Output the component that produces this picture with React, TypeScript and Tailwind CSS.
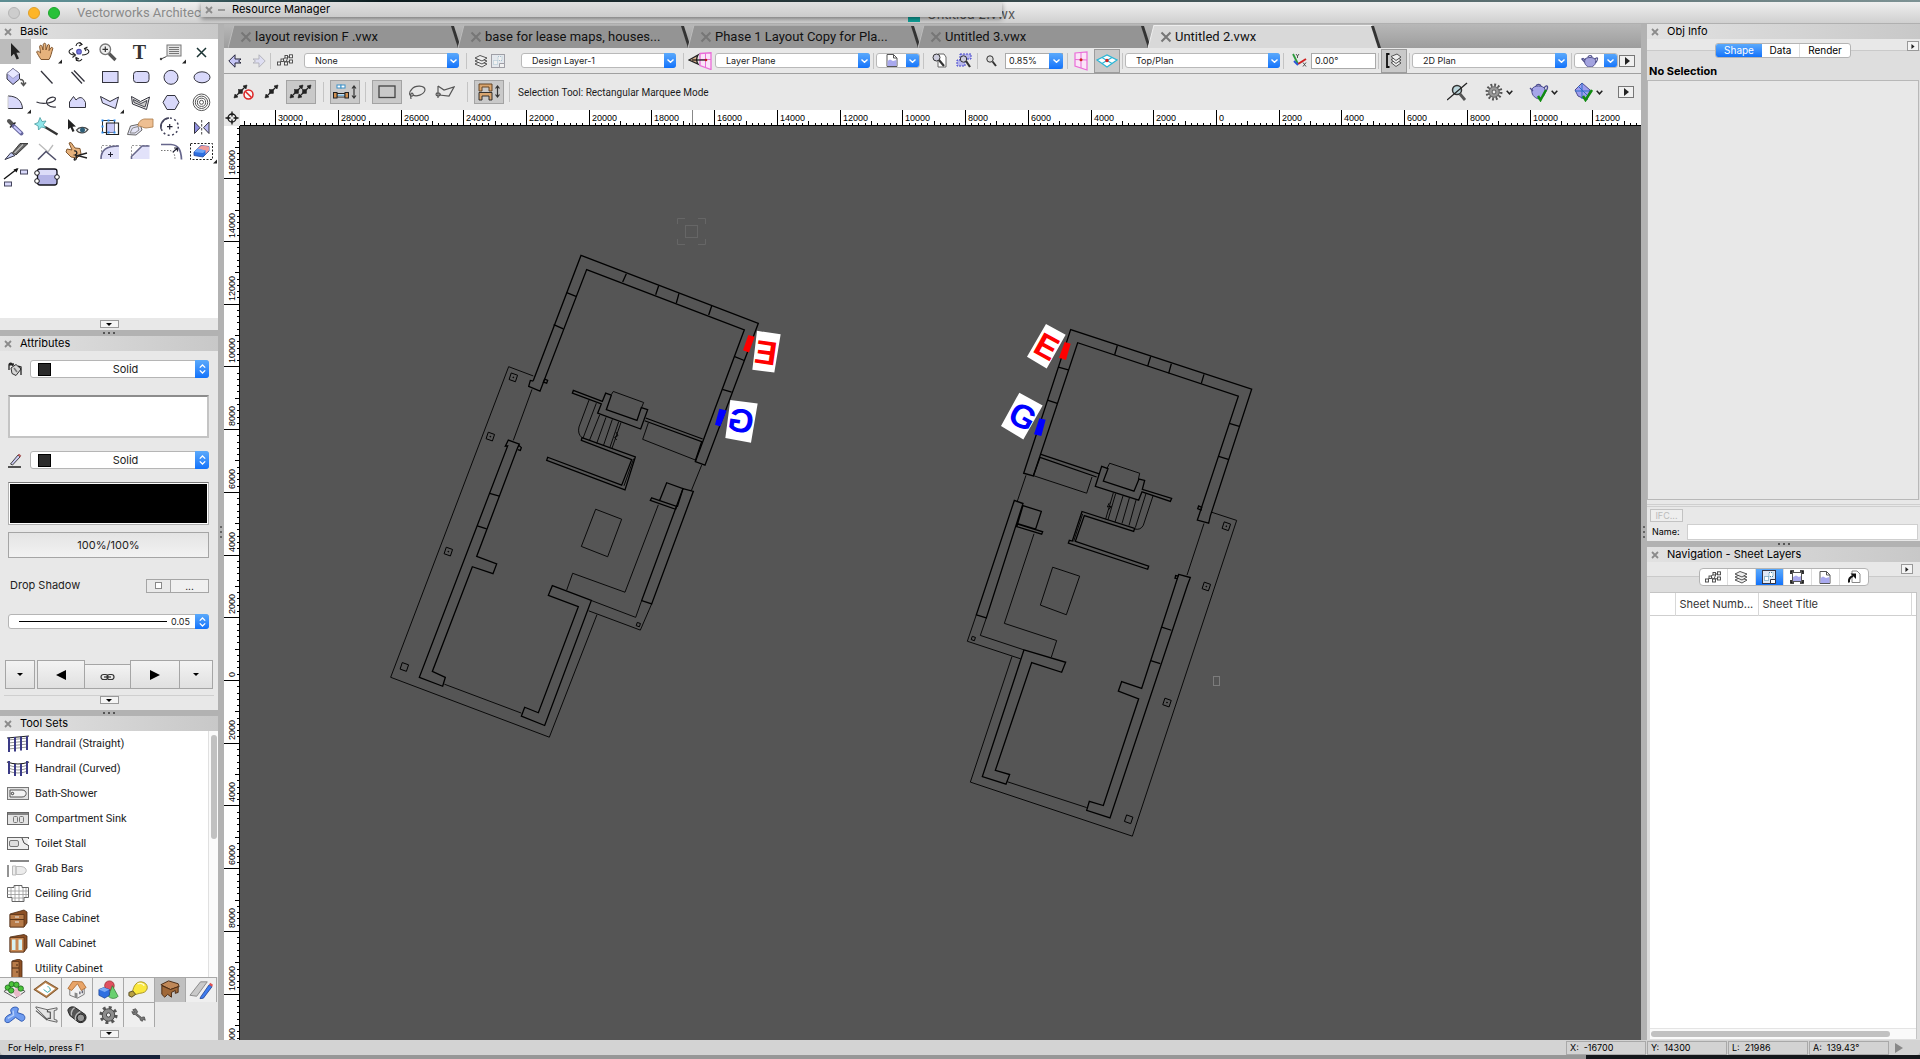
import React from "react";

type Kids = { children?: React.ReactNode };

const INK = "#33333d";
const LAV = "#d9d9fb";

/* ---------- shared pieces ---------- */

function CloseMark({ size = 8 }: { size?: number }) {
  return (
    <svg width={size} height={size} viewBox="0 0 8 8" className="shrink-0">
      <path d="M1 1L7 7M7 1L1 7" stroke={size > 8 ? "#777" : "#8b8b8b"} strokeWidth={size > 8 ? 1.4 : 1.8} />
    </svg>
  );
}

function PanelHeader({ title }: { title: string }) {
  return (
    <header className="flex h-[15px] shrink-0 items-center bg-linear-to-r from-[#e2e2e2] to-[#c8c8c8] pl-1">
      <button aria-label={"Close " + title} className="flex">
        <CloseMark />
      </button>
      <h2 className="ml-2 text-[11px] leading-[15px] text-black">{title}</h2>
    </header>
  );
}

function Splitter() {
  return (
    <div className="flex h-1.5 shrink-0 items-center justify-center gap-[3px] bg-[#b2b2b2]">
      <i className="size-0.5 bg-[#555]" />
      <i className="size-0.5 bg-[#555]" />
      <i className="size-0.5 bg-[#555]" />
    </div>
  );
}

function VSplitter() {
  return (
    <div className="flex w-1.5 shrink-0 flex-col items-center justify-center gap-[3px] bg-[#b2b2b2]">
      <i className="size-0.5 bg-[#666]" />
      <i className="size-0.5 bg-[#666]" />
      <i className="size-0.5 bg-[#666]" />
    </div>
  );
}

function CollapseButton({ label }: { label: string }) {
  return (
    <button aria-label={label} className="mx-auto flex h-2 w-[19px] items-center justify-center border border-[#999] bg-[#f4f4f4]">
      <svg width="6" height="3" viewBox="0 0 6 3">
        <path d="M0 0H6L3 3Z" />
      </svg>
    </button>
  );
}

function ArrowButton({ label, small }: { label: string; small?: boolean }) {
  return (
    <button
      aria-label={label}
      className={
        small
          ? "flex h-2.5 w-3 shrink-0 items-center justify-center border border-[#999] bg-[#f4f4f4]"
          : "flex h-3 w-4 shrink-0 items-center justify-center border border-[#777] bg-[#f0f0f0]"
      }
    >
      <svg width={small ? 4 : 5} height={small ? 5 : 8} viewBox="0 0 5 8">
        <path d="M0 0L5 4L0 8Z" fill="#222" />
      </svg>
    </button>
  );
}

function Dropdown({ label, value, className = "" }: { label: string; value: string; className?: string }) {
  return (
    <div className={"relative flex h-[15px] shrink-0 rounded-[3px] border border-[#b9b9b9] bg-white " + className}>
      <select aria-label={label} className="h-[13px] w-full appearance-none bg-transparent pl-2.5 text-[9px] leading-[13px] text-[#222] outline-none">
        <option>{value}</option>
      </select>
      <span className="pointer-events-none absolute -top-px -right-px flex h-[15px] w-3 items-center justify-center rounded-r-[3px] bg-linear-to-b from-[#5aa9fb] to-[#0f72fb]">
        <svg width="7" height="4" viewBox="0 0 7 4">
          <path d="M.5 .5L3.5 3.3L6.5 .5" fill="none" stroke="#fff" strokeWidth="1.4" />
        </svg>
      </span>
    </div>
  );
}

function Stepper() {
  return (
    <span className="pointer-events-none absolute -top-px -right-px -bottom-px flex w-[14px] items-center justify-center rounded-r-[3px] bg-linear-to-b from-[#5aa9fb] to-[#0f72fb]">
      <svg width="7" height="10" viewBox="0 0 7 10">
        <path d="M.8 3.6L3.5 1L6.2 3.6M.8 6.4L3.5 9L6.2 6.4" fill="none" stroke="#fff" strokeWidth="1.3" />
      </svg>
    </span>
  );
}

const Sep = ({ className = "" }: { className?: string }) => <i className={"h-4 w-px shrink-0 bg-[#c4c4c4] " + className} />;

/* ---------- basic palette ---------- */

const Fly = () => <path d="M31 20.5V24.5H27Z" fill="#222" />;
const Hand = () => (
  <path
    d="M10 20.5C8 17.5 6.5 15 5.6 12.8C6.5 11.5 8 12.3 9.6 14L8.6 7.3C9 5.8 10.6 6 11 7.4L12 11L12.3 5.2C12.8 3.8 14.6 4 14.8 5.4L15 11L16.6 6C17.3 5 18.8 5.6 18.6 7L18 11.6L20 8.6C21 8 22.2 8.8 21.7 10C20.5 13.5 20 17.5 18 20.5Z"
    fill="#e6b27c"
    stroke="#80562f"
    strokeWidth="1"
  />
);

const basicTools: [string, React.ReactNode][] = [
  ["Selection", <path d="M11 4V17.5L14 14.8L16.6 20.6L19 19.5L16.4 13.8L20.2 13.4Z" fill="#222" />],
  ["Pan", <><Hand /><Fly /></>],
  [
    "Flyover",
    <g fill="none" stroke="#222" strokeWidth="1.1">
      <path d="M11 9.5C5 11 6 15.500 13 16M23 9.500C29 11 28 15.500 20 16M14 7C14.500 3.500 17.500 3 19.500 5M14 19C15 22.500 18 23 20 20" />
      <path d="M10.500 13.500L13.500 16L10.500 18.500M24 12L22.500 9.500L25.500 8M17.500 3.500L20 5.500L17 7M14.500 22L14 18.500L17 20" />
      <circle cx="17" cy="12.700" r="2.300" fill="#7a7ae4" stroke="#5050b0" />
    </g>,
  ],
  [
    "Zoom",
    <>
      <path d="M16 14.500L22.500 21" stroke="#555" strokeWidth="3.200" />
      <circle cx="12.300" cy="10.300" r="5.300" fill="#eee" stroke="#777" strokeWidth="1.300" />
      <path d="M9.500 10.300H15M12.300 7.500V13" stroke="#333" strokeWidth="1.200" />
    </>,
  ],
  ["Text", <text x="15.500" y="20" textAnchor="middle" fontFamily="Liberation Serif, serif" fontWeight="bold" fontSize="20" fill="#333">T</text>],
  [
    "Callout",
    <>
      <rect x="12" y="6" width="14" height="11" fill="#e4e4e4" stroke="#777" />
      <path d="M14 8.500H24M14 10.500H24M14 12.500H24M14 14.500H24" stroke="#777" />
      <path d="M11.500 17.500L6 20" stroke="#444" />
      <circle cx="6" cy="20" r="1.200" fill="#444" />
      <Fly />
    </>,
  ],
  ["Locus", <path d="M11 9L20 18M20 9L11 18" stroke="#1a3333" strokeWidth="1.500" />],
  [
    "Extrude",
    <>
      <path d="M7 9.500L13 4.500L19.500 9.500V15L13 20.500L7 15Z" fill="#b9b9ef" stroke={INK} />
      <path d="M7 9.500L13 4.500L19.500 9.500L13 14.500Z" fill="#e8e8ff" stroke="#8888b0" strokeWidth=".7" />
      <path d="M20 15.500C23 15.500 24 17 23.500 20M21 18.500L23.500 21.500L26 18.500" fill="none" stroke="#555" strokeWidth="1.500" />
    </>,
  ],
  ["Line", <path d="M10 7L21.500 19.500" stroke={INK} strokeWidth="1.300" />],
  ["Double Line", <path d="M9.500 8L20 19.500M12 6.500L22.500 17.500" stroke={INK} strokeWidth="1.300" />],
  ["Rectangle", <rect x="9.500" y="7.500" width="15.500" height="11" fill={LAV} stroke={INK} />],
  ["Rounded Rectangle", <rect x="9.500" y="7.500" width="15.500" height="11" rx="3" fill={LAV} stroke={INK} />],
  ["Circle", <circle cx="16" cy="13.300" r="7" fill={LAV} stroke={INK} />],
  ["Oval", <ellipse cx="16" cy="13.300" rx="8" ry="5.500" fill={LAV} stroke={INK} />],
  ["Arc", <><path d="M8 7C17 7 22 12 22.500 19.500H8" fill={LAV} stroke={INK} /><path d="M8 7V19.500" stroke="#ccc" /><Fly /></>],
  ["Freehand", <path d="M5.500 13C10 15 20 15 24 11C26 8 21 7 17 10C13 14 18 19 25 18" fill="none" stroke={INK} strokeWidth="1.200" />],
  ["Polyline", <path d="M7.500 18.500V13L11.500 7.500L14 11C18 7 21 8 23.500 13.500V18.500Z" fill={LAV} stroke={INK} />],
  ["Polygon", <><path d="M7.500 7.500L17 12.500L25.500 8L22.500 19.500L9.500 14Z" fill={LAV} stroke={INK} /><Fly /></>],
  [
    "Double Polygon",
    <>
      <path d="M7.500 7.500L16.500 12.500L25.500 8L22.500 20.500L8.500 15Z" fill="#eee" stroke={INK} />
      <path d="M9.500 10.500L17 14.500L23 11.500L21 18L10 13.500Z" fill="#ccc" stroke={INK} strokeWidth=".9" />
    </>,
  ],
  ["Regular Polygon", <path d="M12 6.500H20L24 13.300L20 20.500H12L8 13.300Z" fill={LAV} stroke={INK} />],
  [
    "Spiral",
    <g fill="none" stroke="#555" strokeWidth="1">
      <circle cx="15.500" cy="13.300" r="8.300" /><circle cx="15.500" cy="13.300" r="6.200" /><circle cx="15.500" cy="13.300" r="4.100" /><circle cx="15.500" cy="13.300" r="2" />
    </g>,
  ],
  [
    "Eyedropper",
    <>
      <path d="M9 7L12.500 10.500" stroke="#555" strokeWidth="4" strokeLinecap="round" />
      <path d="M10 13.500L15.500 8.500" stroke="#222" strokeWidth="1.500" />
      <path d="M13.500 12L21.500 19.500" stroke="#66669c" strokeWidth="4" strokeLinecap="round" />
      <path d="M14 12.500L21 19" stroke="#ccccff" strokeWidth="2" />
    </>,
  ],
  [
    "Magic Wand",
    <>
      <path d="M14 13L26.500 20.500" stroke="#333" strokeWidth="2.500" />
      <path d="M9 3.500L11 7.500L15 7L12.500 10.500L14.500 14L10.500 13L7.500 16L7.200 12L3.500 10L7.200 8.500Z" fill="#8fe6ea" stroke="#4a9aa0" strokeWidth=".8" />
    </>,
  ],
  [
    "Visibility",
    <>
      <path d="M6 5V15.500L8.500 13.500L10.500 18L12.500 17L10.500 12.800L14 12.500Z" fill="#222" />
      <path d="M14.500 16C17 12.500 23 12.500 26 15.500C23 20 17 20 14.500 16Z" fill="#e8eef2" stroke="#444" strokeWidth="1.200" />
      <circle cx="20.500" cy="16" r="2.500" fill="#2f5f78" />
    </>,
  ],
  [
    "Clip",
    <>
      <rect x="9.500" y="6.500" width="12" height="12" fill="none" stroke="#333" />
      <rect x="13.500" y="9" width="8" height="9.500" fill="#c9c9f8" />
      <path d="M13.500 9H25.500V20.500H13.500Z" fill="none" stroke="#222" strokeWidth="1.200" />
      <path d="M8.500 5.500h2v2h-2zM14.500 5.500h2v2h-2zM20.500 5.500h2v2h-2zM8.500 11.500h2v2h-2zM8.500 17.500h2v2h-2zM14.500 17.500h2v2h-2zM20.500 17.500h2v2h-2z" fill="#2a8cf0" />
    </>,
  ],
  [
    "Reshape",
    <>
      <path d="M3.500 20.500L6.500 12L16 10L18 16L12 21Z" fill="#e4e4f6" stroke="#666" />
      <path d="M6 19L8.500 14L14 12.500L15 16L11 19Z" fill="none" stroke="#888" />
      <path d="M14 12C14 7 19 4.500 22 5H29V13L22 14C19 14 18 12 14 12Z" fill="#eebf92" stroke="#a87848" strokeWidth=".8" />
    </>,
  ],
  [
    "Rotate",
    <>
      <circle cx="14.700" cy="12.700" r="8.600" fill="none" stroke="#44445c" strokeWidth="1.500" strokeDasharray="2 2.500" />
      <path d="M6.100 15A8.600 8.600 0 0 1 14 4.100" fill="none" stroke="#44445c" strokeWidth="1.500" />
      <path d="M12 12.700H17.500M14.700 10V15.500" stroke="#223" strokeWidth="1.200" />
    </>,
  ],
  [
    "Mirror",
    <>
      <path d="M8.500 8V19.500L14 13.700Z" fill="#8f8fe0" stroke={INK} />
      <path d="M23 8V19.500L17.500 13.700Z" fill="#b9b9f4" stroke={INK} />
      <path d="M15.700 6V21" stroke="#444" strokeDasharray="2.500 1.500" />
    </>,
  ],
  [
    "Split",
    <>
      <path d="M5 20.500L11 13.500L15 16.500Z" fill="#c5cdf5" stroke="#334" />
      <path d="M12.500 13.500L20 4.500H28L16 16Z" fill="#666" stroke="#222" strokeWidth=".8" />
      <path d="M14.500 14L23 5.500" stroke="#bbb" strokeWidth="1.200" />
    </>,
  ],
  ["Trim", <><path d="M8 5L17 13L22 6" fill="none" stroke="#bbb" strokeWidth="1.300" /><path d="M7 20.500L15 12.500L25 21" fill="none" stroke="#50506a" strokeWidth="1.600" /></>],
  [
    "Connect",
    <>
      <path d="M4 13L5 10L10 11L7 4L9 3.500L13 9L18 9.500L19 15L15 19L9 18Z" fill="#e6b27c" stroke="#80562f" />
      <path d="M12 12C15 11 16 15 13 16L25 19M13 19C10 22 16 22 14 17L25 14" fill="none" stroke="#222" strokeWidth="1.300" />
    </>,
  ],
  [
    "Fillet",
    <>
      <path d="M8.500 20V6.500H26" fill="none" stroke="#999" strokeDasharray="2 1.500" />
      <path d="M8 20C8 11 13 7 26 7V20Z" fill="#e2e2fa" />
      <path d="M8 20C8 11 13 7 26 7" fill="none" stroke="#66668c" strokeWidth="1.600" />
      <path d="M15 15.500H20M17.500 13V18" stroke="#223" />
    </>,
  ],
  [
    "Chamfer",
    <>
      <path d="M7.500 20V6.500H25" fill="none" stroke="#999" strokeDasharray="2 1.500" />
      <path d="M7.500 20L18 7H25.500V20Z" fill="#e2e2fa" />
      <path d="M7.500 20V17.500L18 7H25.500" fill="none" stroke="#66668c" strokeWidth="1.600" />
    </>,
  ],
  [
    "Offset",
    <>
      <path d="M6 5.500H16C23 6 26 10 26.500 20.500" fill="none" stroke="#66668c" strokeWidth="1.700" />
      <path d="M6 11.500H15C18 12 20 15 20 20" fill="none" stroke="#777" strokeDasharray="1.500 1.500" />
      <path d="M18 13L22.500 9M19 9H22.500V12.500" fill="none" stroke="#223" strokeWidth="1.200" />
    </>,
  ],
  [
    "Eraser",
    <>
      <rect x="4.500" y="4.500" width="22" height="16" fill="none" stroke="#222" strokeDasharray="2 1.500" />
      <path d="M8 13L15 6.500L23 7.500V12L17 18L8 16.500Z" fill="#2d6fe0" stroke="#28479c" strokeWidth=".8" />
      <path d="M11.500 10L15.500 6.500L23 7.500V11.500L19.500 15V11.500Z" fill="#ee9c9c" />
      <path d="M8 13L11.500 9.500L19.500 11.500L17 14Z" fill="#6ea4f6" />
      <Fly />
    </>,
  ],
  [
    "Data Connect",
    <>
      <path d="M4 15L17 5" stroke="#111" strokeWidth="1.400" />
      <path d="M18.500 4L13.500 5.500L16.500 8.500Z" fill="#111" />
      <rect x="20.500" y="6" width="7" height="4" fill={LAV} stroke="#44445c" />
      <rect x="4.500" y="18" width="7" height="4" fill={LAV} stroke="#44445c" />
    </>,
  ],
  [
    "Component",
    <>
      <rect x="6.500" y="5" width="19.500" height="16" rx="2.500" fill="#b4b4e6" stroke="#15151c" strokeWidth="1.300" />
      <path d="M7.500 6h17.500v5h-17.500z" fill="#dcdcf8" />
      <g fill="#fff" stroke="#15151c"><circle cx="6" cy="9" r="2.300" /><circle cx="6" cy="17" r="2.300" /><circle cx="26" cy="13" r="2.300" /></g>
    </>,
  ],
];

function BasicPalette() {
  return (
    <section>
      <PanelHeader title="Basic" />
      <div className="h-[279px] bg-white">
        <div className="grid grid-cols-[repeat(7,31px)]">
          {basicTools.map(([name, art], i) => (
            <button key={name} aria-label={name} className={i === 0 ? "h-[25px] bg-[#bcbcbc]" : "h-[25px]"}>
              <svg width="31" height="25" viewBox="0 0 31 25">{art}</svg>
            </button>
          ))}
        </div>
      </div>
      <div className="flex h-3 items-center">
        <CollapseButton label="Collapse basic palette" />
      </div>
    </section>
  );
}

/* ---------- attributes ---------- */

function FillSelect({ label }: { label: string }) {
  return (
    <div className="relative flex h-[18px] flex-1 items-center rounded-[3px] border border-[#b5b5b5] bg-white">
      <i className="ml-[7px] size-[13px] shrink-0 border border-black bg-[#2b2b2b]" />
      <select aria-label={label} className="h-4 w-full appearance-none bg-transparent pr-4 pl-2 text-center text-[11px] leading-4 text-[#222] outline-none [text-align-last:center]">
        <option>Solid</option>
      </select>
      <Stepper />
    </div>
  );
}

const navBtn = "flex items-center justify-center border border-[#a5a5a5] bg-linear-to-b from-[#f3f3f3] to-[#e0e0e0]";

function Attributes() {
  return (
    <section className="flex h-[374px] shrink-0 flex-col">
      <PanelHeader title="Attributes" />
      <div className="flex flex-col pt-[9px] pr-[9px] pl-2">
        <div className="flex items-center gap-2">
          <svg width="14" height="15" viewBox="0 0 14 15">
            <path d="M3 6L8 2.500L13 7L8 13.500L4 11.500Z" fill="#d6d6d6" stroke="#333" />
            <path d="M1 8V3C1 1 4 0 5 4M1 3L6 2M10 4L13 5V13" fill="none" stroke="#222" strokeWidth="1.300" />
            <path d="M6 6L9 10" stroke="#777" strokeWidth="1.500" />
          </svg>
          <FillSelect label="Fill style" />
        </div>
        <button aria-label="Fill color" className="mt-[17px] h-[43px] border-2 border-[#c4c4c4] border-t-[#8c8c8c] bg-white" />
        <div className="mt-[13px] flex items-center gap-2">
          <svg width="14" height="15" viewBox="0 0 14 15">
            <path d="M2.500 11L10 2L12 4L4.500 12Z" fill="#c9c9f2" stroke="#444" />
            <path d="M10 2L11 1L13 2.800L12 4Z" fill="#d66" stroke="#844" strokeWidth=".6" />
            <path d="M0 14H13" stroke="#111" strokeWidth="1.400" />
          </svg>
          <FillSelect label="Pen style" />
        </div>
        <button aria-label="Pen color" className="mt-[13px] h-[43px] border border-[#b0b0b0] border-t-[#777] bg-white p-px">
          <span className="block h-full bg-black" />
        </button>
        <button className="mt-[7px] h-[26px] border border-[#a5a5a5] bg-linear-to-b from-[#e4e4e4] to-[#f2f2f2] text-[11px] leading-6 text-[#222]">100%/100%</button>
        <div className="mt-5 flex items-center justify-between">
          <span className="ml-0.5 text-[11px] leading-[15px] text-[#222]">Drop Shadow</span>
          <div className="flex h-[14px]">
            <label className="flex w-6 items-center justify-center border border-r-0 border-[#a5a5a5] bg-[#e9e9e9]">
              <input type="checkbox" aria-label="Drop shadow" className="size-[7px] appearance-none border border-[#888] bg-white" />
            </label>
            <button aria-label="Drop shadow settings" className="w-[39px] border border-[#a5a5a5] bg-[#f0f0f0] text-[10px] leading-[12px]">...</button>
          </div>
        </div>
        <div className="relative mt-[21px] flex h-[15px] items-center rounded-[3px] border border-[#b5b5b5] bg-white">
          <i className="ml-2.5 h-px flex-1 bg-black" />
          <select aria-label="Line thickness" className="h-[13px] w-[41px] appearance-none bg-transparent pl-1 text-[9px] leading-[13px] text-[#222]">
            <option>0.05</option>
          </select>
          <Stepper />
        </div>
      </div>
      <div className="mt-[31px] flex items-end px-[5px]">
        <button aria-label="Start marker options" className={navBtn + " mr-0.5 h-[29px] w-[30px]"}>
          <svg width="6" height="3" viewBox="0 0 6 3"><path d="M0 0H6L3 3Z" /></svg>
        </button>
        <button aria-label="Start marker" className={navBtn + " h-[29px] w-12"}>
          <svg width="10" height="10" viewBox="0 0 10 10"><path d="M10 0V10L0 5Z" /></svg>
        </button>
        <button aria-label="Link markers" className={navBtn + " h-[25px] flex-1 border-x-0"}>
          <svg width="15" height="8" viewBox="0 0 15 8" fill="none" stroke="#333" strokeWidth="1.200">
            <rect x="1" y="1.500" width="7" height="5" rx="2.500" /><rect x="7" y="1.500" width="7" height="5" rx="2.500" /><path d="M4 4H11" />
          </svg>
        </button>
        <button aria-label="End marker" className={navBtn + " h-[29px] w-[50px]"}>
          <svg width="10" height="10" viewBox="0 0 10 10"><path d="M0 0V10L10 5Z" /></svg>
        </button>
        <button aria-label="End marker options" className={navBtn + " h-[29px] w-[33px] border-l-0"}>
          <svg width="6" height="3" viewBox="0 0 6 3"><path d="M0 0H6L3 3Z" /></svg>
        </button>
      </div>
      <div className="mx-1 mt-1.5 flex border-t border-[#cfcfcf]">
        <CollapseButton label="Collapse attributes" />
      </div>
    </section>
  );
}

/* ---------- tool sets ---------- */

const toolItems: [string, React.ReactNode][] = [
  [
    "Handrail (Straight)",
    <>
      <path d="M2 6L22 4M2 9L22 7M2 12L22 10M2 15L22 13" stroke="#888" strokeWidth=".9" />
      <path d="M1 4L23 2" stroke="#222" strokeWidth="1.200" />
      <path d="M3 3.500V18M9 3V17.500M15 2.500V16.500M21 2V16" stroke="#3a3a86" strokeWidth="2" />
    </>,
  ],
  [
    "Handrail (Curved)",
    <>
      <path d="M2 6Q12 10 22 6M2 9Q12 13 22 9M2 12Q12 16 22 12" fill="none" stroke="#888" strokeWidth=".9" />
      <path d="M1 3Q12 7 23 3" fill="none" stroke="#222" strokeWidth="1.200" />
      <path d="M3 2V15M9 5V17M15 5V17M21 2V15" stroke="#3a3a86" strokeWidth="2" />
    </>,
  ],
  [
    "Bath-Shower",
    <>
      <rect x="1.500" y="3.500" width="21" height="12" fill="#e0e0e0" stroke="#777" />
      <path d="M4 6H16C21.500 6 21.500 13 16 13H4Z" fill="#f2f2f2" stroke="#555" />
      <circle cx="6.500" cy="9.500" r="1.200" fill="none" stroke="#333" />
    </>,
  ],
  [
    "Compartment Sink",
    <>
      <rect x="1.500" y="3.500" width="21" height="12" fill="#e4e4e4" stroke="#666" />
      <path d="M1 5H23" stroke="#666" strokeWidth="1.500" />
      <rect x="7.500" y="7.500" width="4" height="6" rx="1" fill="none" stroke="#777" />
      <rect x="13.500" y="7.500" width="4" height="6" rx="1" fill="none" stroke="#777" />
    </>,
  ],
  [
    "Toilet Stall",
    <>
      <rect x="1.500" y="3.500" width="21" height="12" fill="#eee" stroke="#666" />
      <path d="M22.500 5V11" stroke="#fff" strokeWidth="1.500" />
      <rect x="3.500" y="6.500" width="9" height="6" rx="1.500" fill="#ddd" stroke="#777" />
      <path d="M16 4L18 9L22.500 11.500" fill="none" stroke="#444" />
    </>,
  ],
  [
    "Grab Bars",
    <>
      <path d="M4 2H23M2 6V18" stroke="#888" strokeWidth="1.800" />
      <path d="M6.500 7H10V16H6.500ZM10 7.500H15C22 8 22 15 15 15.500H10Z" fill="#ececec" stroke="#bbb" />
    </>,
  ],
  [
    "Ceiling Grid",
    <>
      <path d="M1.500 3.500H8V1.500H16V3.500H22.500V13.500H18V17.500H6V13.500H1.500Z" fill="#fff" stroke="#666" />
      <path d="M1.500 7H22M1.500 10.500H22M5 3V13M9 2V17M13 2V17M17 4V17M20 4V13M6 14H18" stroke="#999" strokeWidth=".8" />
    </>,
  ],
  [
    "Base Cabinet",
    <>
      <path d="M4 5L18 1L21 3V14L18 18H4Z" fill="#8c4f24" stroke="#4a2a12" strokeWidth=".8" />
      <path d="M4 5.500H18V18H4Z" fill="#b87c4a" stroke="#5a3418" strokeWidth=".8" />
      <path d="M4 10.500H18" stroke="#5a3418" /><path d="M9 8H13M9 13H13" stroke="#eee" />
    </>,
  ],
  [
    "Wall Cabinet",
    <>
      <path d="M4 3L18 .5L21 2V14L18 18H4Z" fill="#8c4f24" stroke="#4a2a12" strokeWidth=".8" />
      <path d="M4 3.500H18V18H4Z" fill="#c98a55" stroke="#5a3418" strokeWidth=".8" />
      <path d="M6 5.500H9.500V16H6ZM12.500 5.500H16V16H12.500Z" fill="#d8f2f2" />
    </>,
  ],
  [
    "Utility Cabinet",
    <>
      <path d="M6 2L13 0L16 2V19H6Z" fill="#8c4f24" stroke="#4a2a12" strokeWidth=".8" />
      <path d="M6 2.500H13V19H6Z" fill="#b87c4a" stroke="#5a3418" strokeWidth=".8" />
      <path d="M6 9H13M11 5V7M11 12V14" stroke="#4a2a12" />
    </>,
  ],
];

const setIcons: [string, React.ReactNode][] = [
  [
    "Site Planning",
    <>
      <path d="M4 14L14 7L26 14L16 21Z" fill="#eee" stroke="#555" />
      <path d="M12 13L18 10L22 18L17 20Z" fill="#e7b9c8" />
      <g fill="#4cc43c" stroke="#1c601c" strokeWidth=".8"><circle cx="8" cy="10" r="2.800" /><circle cx="12" cy="6.500" r="2.800" /><circle cx="11.500" cy="13" r="2.800" /><circle cx="17" cy="7" r="2.800" /><circle cx="21.500" cy="11" r="2.800" /></g>
    </>,
  ],
  [
    "Building Shell",
    <>
      <path d="M4 12L15 4L27 11L16 19.500Z" fill="#fff" stroke="#b88450" strokeWidth="2" />
      <path d="M3 12L15 3L28 11L16 20.500Z" fill="none" stroke="#5a3a1a" strokeWidth=".6" />
      <path d="M13 12L17 15L20 13C20 11 19 9 17 9" fill="none" stroke="#3aa" />
    </>,
  ],
  [
    "Architecture",
    <>
      <path d="M8 11V18L16 21L23 17V9L16 5Z" fill="#f2f2f2" stroke="#777" />
      <path d="M6 11L11 3.500L21 4L25 10L20 13L16 6L10 13Z" fill="#e8a468" stroke="#a86428" strokeWidth=".8" />
      <path d="M13 20V15L16 16V21Z" fill="#888" />
      <path d="M18.500 14V17M21 13V16" stroke="#556" strokeWidth="1.300" />
    </>,
  ],
  [
    "3D Modeling",
    <>
      <circle cx="17" cy="8" r="5" fill="#e05060" stroke="#902020" strokeWidth=".7" />
      <path d="M20 8L26 19C24 22 18 22 16 19Z" fill="#6ad070" stroke="#2a702a" strokeWidth=".7" />
      <path d="M6 12L11 10L17 12V18L12 21L6 18Z" fill="#2f6fe0" stroke="#1c408c" strokeWidth=".7" />
      <path d="M6 12L11 10L17 12L12 14.500Z" fill="#7aaaf6" />
    </>,
  ],
  [
    "Visualization",
    <>
      <path d="M9 14C9 12 11 3.500 18 4C26 5 26 14 19 15.500C15 16 13 17 11 17.500Z" fill="#fbe83c" stroke="#a8942a" />
      <path d="M5 15L9 13.500L12 17L8 20L5 18.500Z" fill="#b8a040" stroke="#554a20" />
      <path d="M14 6C17 5 20 6 21 8" fill="none" stroke="#fffbd0" strokeWidth="1.500" />
    </>,
  ],
  [
    "Furn/Fixtures",
    <>
      <path d="M6 7L14 3L24 6L25 9L16 12Z" fill="#c08858" stroke="#4a2a12" />
      <path d="M7 8L16 12L24 9V15L21 16V13L17 15V20L13 17L10 20L7 17Z" fill="#a06838" stroke="#4a2a12" />
    </>,
  ],
  [
    "Dims/Notes",
    <>
      <path d="M4 18L15 4H22L11 19Z" fill="#c9c9c9" stroke="#888" />
      <path d="M15 20L24 7L27 9L18 21L14.500 21.500Z" fill="#3f7df0" stroke="#1c3c8c" strokeWidth=".8" />
      <path d="M24 7L25 5L28 7L27 9Z" fill="#e05050" />
    </>,
  ],
  [
    "Piping",
    <>
      <path d="M5 18C5 14 8 13 12 11L11 8C11 4 18 3 19 6L18 10L24 12C27 14 26 19 22 19L16 15L11 19C9 21 5 21 5 18Z" fill="#6f9cf0" stroke="#2b56b0" strokeWidth="1" />
      <path d="M8 16L14 12.500L13.500 8" fill="none" stroke="#b4cefa" strokeWidth="1.500" />
    </>,
  ],
  [
    "Detailing",
    <>
      <path d="M5 4L17 7L27 5V7L24 8V17L27 18V20L18 18L5 5Z" fill="#e4e4e4" stroke="#555" strokeWidth=".9" />
      <path d="M17 7V9L20 9.500V16L17 16M5 8L17 18" fill="none" stroke="#555" strokeWidth="1.200" />
    </>,
  ],
  [
    "Machine Design",
    <>
      <path d="M6 8C6 4 12 3 14 5L24 12C27 17 22 22 17 20L8 13Z" fill="#555" stroke="#222" />
      <path d="M13 5C10 7 9 10 10 13M19 9C15 11 13 14 14 18" fill="none" stroke="#bbb" strokeWidth="1.300" />
      <circle cx="19.500" cy="15.500" r="4" fill="#999" stroke="#222" />
    </>,
  ],
  [
    "Fasteners",
    <>
      <circle cx="16" cy="12.500" r="8" fill="none" stroke="#555" strokeWidth="3" strokeDasharray="3.100 3.180" />
      <circle cx="16" cy="12.500" r="6.500" fill="#8c8c8c" stroke="#444" />
      <circle cx="16" cy="12.500" r="2.200" fill="#eee" stroke="#444" />
    </>,
  ],
  [
    "MEP",
    <path d="M9 7L12 6L14 9L13 11L18 15L21 14.500L22 18L20 17L19 19L17 18L16.500 16L11.500 12L9.500 12L8 9L11 9.500Z" fill="#777" stroke="#444" strokeWidth=".8" />,
  ],
];

function ToolSets() {
  return (
    <section className="flex min-h-0 flex-1 flex-col">
      <PanelHeader title="Tool Sets" />
      <div className="flex min-h-0 flex-1 overflow-hidden bg-white">
        <ul className="flex-1">
          {toolItems.map(([name, art]) => (
            <li key={name}>
              <button className="flex h-[25px] w-full items-center pl-1.5 text-left font-['Roboto',sans-serif] text-[11px] leading-[15px] text-[#1c1c1c]">
                <svg width="24" height="19" viewBox="0 0 24 19" className="mr-[5px] shrink-0">{art}</svg>
                {name}
              </button>
            </li>
          ))}
        </ul>
        <div className="w-2.5 border-l border-[#e0e0e0] bg-[#fafafa] px-px pt-1">
          <div className="mx-auto h-26 w-1.5 rounded-full bg-[#c1c1c1]" />
        </div>
      </div>
      <div className="grid grid-cols-[repeat(7,31px)] bg-[#e8e8e8]">
        {setIcons.map(([name, art]) => (
          <button
            key={name}
            aria-label={name}
            className={
              "flex h-[25px] items-center justify-center border-t border-r border-[#a8a8a8] " + (name === "Furn/Fixtures" ? "bg-[#c0c0c0]" : "bg-[#efefef]")
            }
          >
            <svg width="30" height="24" viewBox="0 0 31 25">{art}</svg>
          </button>
        ))}
      </div>
      <div className="flex h-[13px] items-center">
        <CollapseButton label="Collapse tool sets" />
      </div>
    </section>
  );
}

/* ---------- document tabs ---------- */

const docs = ["layout revision F .vwx", "base for lease maps, houses...", "Phase 1 Layout Copy for Pla...", "Untitled 3.vwx", "Untitled 2.vwx"];

function DocTabs() {
  return (
    <nav className="flex h-6 shrink-0 items-end bg-linear-to-b from-[#b8b8b8] to-[#9d9d9d] pl-1" aria-label="Open documents">
      {docs.map((d, i) => {
        const active = i === docs.length - 1;
        return (
          <div key={d} className="relative flex h-[23px] w-[230px] shrink-0 items-center pl-3">
            <svg className="absolute inset-0" width="236" height="23" viewBox="0 0 236 23">
              <path d="M6 0H224L232 23H0Z" fill={active ? "#d9d9d9" : "#949494"} />
              <path d="M6 .5H224" stroke={active ? "#eee" : "#b0b0b0"} />
              <path d="M0 23L6 0" stroke={active ? "#eee" : "#bcbcbc"} />
              <path d="M223 1H226L233 23H230Z" fill="#333" />
            </svg>
            <button aria-label={"Close " + d} className="relative flex">
              <CloseMark size={12} />
            </button>
            <a href="#" className="relative ml-[3px] font-['Roboto',sans-serif] text-[13px] leading-4 whitespace-nowrap text-[#111]">{d}</a>
          </div>
        );
      })}
    </nav>
  );
}

/* ---------- toolbars ---------- */

const ClassesIcon = () => (
  <svg width="16" height="13" viewBox="0 0 16 13" fill="#f4f4f4" stroke="#444" strokeWidth=".9">
    <path d="M3 9L5 6L9 8L11 3L14 2.500M9 8L14 7.500M5 6L9 3" fill="none" />
    <rect x=".5" y="8" width="3" height="3" /><rect x="4" y="5" width="2.500" height="2.500" /><rect x="7.500" y="8" width="3" height="3" /><rect x="12.500" y=".8" width="3" height="3" /><rect x="12.500" y="6" width="3" height="3" /><rect x="8" y="1.500" width="2.500" height="2.500" />
  </svg>
);
const LayersIcon = () => (
  <svg width="14" height="14" viewBox="0 0 14 14" fill="#eee" stroke="#444" strokeWidth=".9">
    <path d="M1 10L6 7.500L13 10L8 13Z" /><path d="M1 7L6 4.500L13 7L8 10Z" /><path d="M1 4L6 1.500L13 4L8 7Z" />
  </svg>
);
const SheetIcon = () => (
  <svg width="14" height="14" viewBox="0 0 14 14" fill="#dfe8f6" stroke="#334">
    <rect x=".5" y=".5" width="13" height="13" /><rect x="2.500" y="6.500" width="4" height="4" fill="#fff" stroke="#48a" strokeDasharray="1 1" /><path d="M7 2.500H11V6.500H7Z" fill="#fff" stroke="#48a" strokeDasharray="1 1" /><path d="M8.500 13.500V9.500H13.500V13.500Z" fill="#fff" />
  </svg>
);
const PageIcon = () => (
  <svg width="12" height="13" viewBox="0 0 12 13" stroke="#555">
    <path d="M1 .5H7.500L11 4V12.500H1Z" fill="#fff" /><path d="M1.500 7L4 5.500L7 7L10.500 6V12H1.500Z" fill="#a9a9ee" stroke="none" /><path d="M7.500 .5V4H11" fill="none" />
  </svg>
);
const Teapot = () => (
  <svg width="18" height="14" viewBox="0 0 18 14">
    <path d="M4 5C6 3 12 3 14 5C16 9 13 13 9 13C5 13 2.500 9 4 5Z" fill="#a3a3df" stroke="#50508c" />
    <path d="M7 3.500C7 1 11 1 11 3.500M3.500 8L.8 5L2 4.500L4.500 6M14 5C17 2 17.500 5 14.500 9" fill="none" stroke="#50508c" strokeWidth="1.200" />
  </svg>
);

function SmallSelect({ label, children, className = "" }: Kids & { label: string; className?: string }) {
  return (
    <button aria-label={label} className={"flex h-[15px] w-11 shrink-0 items-center overflow-hidden rounded-[3px] border border-[#b9b9b9] bg-white " + className}>
      <span className="flex flex-1 justify-center">{children}</span>
      <span className="flex h-[15px] w-[13px] items-center justify-center bg-linear-to-b from-[#5aa9fb] to-[#0f72fb]">
        <svg width="7" height="4" viewBox="0 0 7 4"><path d="M.5 .5L3.500 3.300L6.500 .5" fill="none" stroke="#fff" strokeWidth="1.400" /></svg>
      </span>
    </button>
  );
}

function ViewBar() {
  return (
    <div className="flex h-[26px] shrink-0 items-center overflow-hidden border-b border-[#a0a0a0] bg-[#e8e8e8]">
      <button aria-label="Previous view" className="ml-1">
        <svg width="14" height="14" viewBox="0 0 14 14"><path d="M.8 7L7 .8V5H13L10.500 7L13 9H7V13.200Z" fill="#c6c6f6" stroke="#222238" /></svg>
      </button>
      <button aria-label="Next view" className="ml-2.5">
        <svg width="14" height="14" viewBox="0 0 14 14"><path d="M13.200 7L7 .8V5H1L3.500 7L1 9H7V13.200Z" fill="#dedef2" stroke="#b4b4bc" /></svg>
      </button>
      <Sep className="ml-1" />
      <button aria-label="Classes" className="ml-1.5"><ClassesIcon /></button>
      <Dropdown label="Active class" value="None" className="ml-[11px] w-[155px]" />
      <Sep className="ml-[7px]" />
      <button aria-label="Layers" className="ml-[7px]"><LayersIcon /></button>
      <button aria-label="Sheet layers" className="ml-[3px] opacity-40"><SheetIcon /></button>
      <Dropdown label="Active layer" value="Design Layer-1" className="ml-4 w-[155px]" />
      <Sep className="ml-[7px]" />
      <svg width="24" height="18" viewBox="0 0 24 18" className="ml-1 shrink-0">
        <path d="M12 1.500L23 .8V17.500L12 13.500Z" fill="#fbe4f8" stroke="#ea6cd8" strokeWidth="1.300" />
        <path d="M17.500 1V15M12 7.500H23" stroke="#ea6cd8" />
        <path d="M1 8L10 3C8.500 5.500 8.500 9.500 10 12Z" fill="#d8b08c" stroke="#222" strokeWidth="1.300" />
        <path d="M4 8H18" stroke="#111" strokeWidth="1.200" /><circle cx="18" cy="8" r="1.300" fill="#c01818" />
      </svg>
      <Dropdown label="Active plane" value="Layer Plane" className="ml-[3px] w-[155px]" />
      <Sep className="ml-[3px]" />
      <SmallSelect label="Saved views" className="ml-0.5"><PageIcon /></SmallSelect>
      <Sep className="ml-[3px]" />
      <button aria-label="Fit to page" className="ml-2">
        <svg width="15" height="15" viewBox="0 0 15 15"><path d="M6 1H12L14 4V14H6Z" fill="#fff" stroke="#666" /><circle cx="4.500" cy="4.500" r="3.500" fill="#ccd" stroke="#333" /><path d="M7 7L12 13" stroke="#333" strokeWidth="2.200" /></svg>
      </button>
      <button aria-label="Fit to objects" className="ml-[9px]">
        <svg width="16" height="15" viewBox="0 0 16 15"><path d="M4 1H15V6H9V13H1V7H4Z" fill="#b6b6ec" stroke="#44c" strokeDasharray="2 1" /><circle cx="7.500" cy="6" r="3.200" fill="#ccd" stroke="#333" /><path d="M10 8L14 14" stroke="#333" strokeWidth="2.200" /></svg>
      </button>
      <Sep className="ml-[5px]" />
      <svg width="11" height="12" viewBox="0 0 11 12" className="ml-2 shrink-0"><circle cx="4" cy="4" r="3.200" fill="#ddd" stroke="#333" /><path d="M6.500 6.500L10 11" stroke="#333" strokeWidth="2" /></svg>
      <label className="relative ml-2 flex h-4 w-[58px] shrink-0 border border-[#aaa] bg-white">
        <input aria-label="Zoom" defaultValue="0.85%" className="w-full bg-transparent pl-[3px] text-[9px] leading-[14px] text-[#222] outline-none" />
        <span className="pointer-events-none absolute -top-px -right-px flex h-4 w-[14px] items-center justify-center rounded-r-[3px] bg-linear-to-b from-[#5aa9fb] to-[#0f72fb]">
          <svg width="7" height="4" viewBox="0 0 7 4"><path d="M.5 .5L3.500 3.300L6.500 .5" fill="none" stroke="#fff" strokeWidth="1.400" /></svg>
        </span>
      </label>
      <Sep className="ml-1" />
      <button aria-label="Look at working plane" className="ml-1.5">
        <svg width="14" height="20" viewBox="0 0 14 20"><path d="M1 2L13 1V19L1 15Z" fill="#fbe4f8" stroke="#ea6cd8" strokeWidth="1.200" /><path d="M7 1.500V17M1 8.500L13 9" stroke="#ea6cd8" /><circle cx="7" cy="8.700" r="1.500" fill="#d02020" /></svg>
      </button>
      <button aria-label="Unified view" className="ml-1.5 flex h-6 w-[26px] items-center justify-center border border-[#9c9c9c] bg-[#c9c9c9]">
        <svg width="22" height="14" viewBox="0 0 22 14"><path d="M1 6L11 1L21 6L11 13Z" fill="#fff" stroke="#2bb6d6" strokeWidth="1.300" /><path d="M6 3.500L16 9.500M16 3.500L6 9.500" stroke="#2bb6d6" strokeWidth="1.200" /><circle cx="11" cy="6.500" r="1.700" fill="#d02020" /></svg>
      </button>
      <Sep className="ml-0.5" />
      <Dropdown label="Standard view" value="Top/Plan" className="ml-0.5 w-[155px]" />
      <Sep className="ml-[3px]" />
      <svg width="17" height="15" viewBox="0 0 17 15" className="ml-[7px] shrink-0">
        <path d="M7 11L2 1" stroke="#2c9a3c" strokeWidth="1.800" /><path d="M7 11L15 6" stroke="#d02020" strokeWidth="2" /><path d="M3 8L7 12" stroke="#2b58d8" strokeWidth="2" /><path d="M5 1L6.500 3L8 1M6.500 3V5M12 9.500L15 13.500M15 9.500L12 13.500" stroke="#444" fill="none" strokeWidth=".9" />
      </svg>
      <input aria-label="Rotate plan" defaultValue="0.00°" className="ml-[3px] h-4 w-[65px] shrink-0 border border-[#aaa] bg-white pl-[3px] text-[9px] leading-[14px] text-[#222] outline-none" />
      <Sep className="ml-0.5" />
      <button aria-label="Layer stacking" className="ml-0.5 flex h-6 w-[26px] items-center justify-center border border-[#9c9c9c] bg-[#c9c9c9]">
        <svg width="16" height="15" viewBox="0 0 16 15">
          <path d="M3.500 1H1V14H3.500" fill="none" stroke="#111" strokeWidth="1.800" />
          <path d="M5 9.500L11 7L15 10L10 13.500Z" fill="#eee" stroke="#444" strokeWidth=".9" /><path d="M5 6.500L11 4L15 7L10 10.500Z" fill="#eee" stroke="#444" strokeWidth=".9" /><path d="M5 3.500L11 1L15 4L10 7.500Z" fill="#eee" stroke="#444" strokeWidth=".9" />
        </svg>
      </button>
      <Sep className="ml-0.5" />
      <Dropdown label="Render mode" value="2D Plan" className="ml-0.5 w-[155px]" />
      <Sep className="ml-1" />
      <SmallSelect label="Render settings" className="ml-0.5"><Teapot /></SmallSelect>
      <div className="ml-px flex"><ArrowButton label="View bar options" /></div>
    </div>
  );
}

const modeOn = "flex h-6 w-[30px] shrink-0 items-center justify-center border border-[#a3a3a3] bg-[#c9c9c9]";

const Snap = ({ x = 0 }: { x?: number }) => (
  <g transform={`translate(${x} 0)`} stroke="#222" fill="#222">
    <path d="M2 13L13 2" strokeWidth="1.200" /><path d="M14 1L10 2L13 5ZM1 14L2 10L5 13Z" strokeWidth=".6" /><rect x="5.500" y="5.500" width="4" height="4" strokeWidth=".5" />
  </g>
);
const Chev = () => (
  <svg width="7" height="5" viewBox="0 0 7 5"><path d="M.7 .8L3.500 3.800L6.300 .8" fill="none" stroke="#222" strokeWidth="1.500" /></svg>
);

function ModeBar() {
  return (
    <div className="flex h-9 shrink-0 items-center bg-[#e8e8e8]">
      <button aria-label="Disable interactive scaling" className="ml-[9px]">
        <svg width="22" height="16" viewBox="0 0 22 16"><Snap /><circle cx="15.500" cy="10.500" r="4.500" fill="#fff" fillOpacity=".6" stroke="#d22" strokeWidth="1.500" /><path d="M12.500 7.500L18.500 13.500" stroke="#d22" strokeWidth="1.500" /></svg>
      </button>
      <button aria-label="Single object scaling" className="ml-[9px]"><svg width="16" height="16" viewBox="0 0 16 16"><Snap /></svg></button>
      <button aria-label="Unrestricted scaling" className={modeOn + " ml-1.5"}><svg width="24" height="16" viewBox="0 0 24 16"><Snap /><Snap x={8} /></svg></button>
      <Sep className="ml-[7px] !h-5" />
      <button aria-label="Wall insertion" className={modeOn + " ml-1.5"}>
        <svg width="26" height="16" viewBox="0 0 26 16">
          <rect x="5" y="1" width="4" height="3" fill="#fff" stroke="#3a90c8" /><rect x="9" y="1" width="4" height="3" fill="#fff" stroke="#3a90c8" />
          <rect x="5" y="9.500" width="8" height="3.500" fill="#fff" stroke="#222" /><path d="M5 11.200H13" stroke="#3a90c8" />
          <rect x="1.500" y="8.500" width="3.500" height="5.500" fill="#d09050" stroke="#222" /><rect x="13" y="8.500" width="3.500" height="5.500" fill="#d09050" stroke="#222" />
          <path d="M22 2V14M20 4.500L22 2L24 4.500M20 11.500L22 14L24 11.500" fill="none" stroke="#333" strokeWidth="1.200" />
        </svg>
      </button>
      <Sep className="ml-[5px] !h-5" />
      <button aria-label="Rectangular marquee" className={modeOn + " ml-1.5"}><svg width="18" height="14" viewBox="0 0 18 14"><rect x="1" y="1" width="16" height="11.500" fill="none" stroke="#444" strokeWidth="1.300" /></svg></button>
      <button aria-label="Lasso marquee" className="ml-1.5">
        <svg width="18" height="16" viewBox="0 0 18 16"><path d="M5 11C8 13 16 11 17 6C17 1 7 1 4 5C2 7 1 9 2 11C3 13 6 12 5 10C4 8 2 9 3 15" fill="none" stroke="#555" strokeWidth="1.200" /></svg>
      </button>
      <button aria-label="Polygonal marquee" className="ml-[9px]">
        <svg width="20" height="16" viewBox="0 0 20 16"><path d="M3 2L9 6L19 3L14 12L4 11M3 2V14M1 10C2 8 6 9 5 11C4 13 1 12 1 10" fill="none" stroke="#555" strokeWidth="1.200" /></svg>
      </button>
      <Sep className="ml-3 !h-5" />
      <button aria-label="Alignment" className={modeOn + " ml-1.5"}>
        <svg width="24" height="18" viewBox="0 0 24 18">
          <path d="M2 1H15V8H12V4H5V8H2Z" fill="#d9a56e" stroke="#5a3a1c" strokeWidth=".9" /><path d="M2 17V9.500H15V17H12V13H5V17Z" fill="#d9a56e" stroke="#222" strokeWidth=".9" />
          <path d="M20.500 3V14M18.500 5.500L20.500 3L22.500 5.500M18.500 11.500L20.500 14L22.500 11.500" fill="none" stroke="#333" strokeWidth="1.200" />
        </svg>
      </button>
      <Sep className="ml-[5px] !h-5" />
      <p className="ml-2 font-['Roboto',sans-serif] text-[10px] leading-[15px] whitespace-nowrap text-[#1c1c1c]">Selection Tool: Rectangular Marquee Mode</p>
      <div className="ml-auto flex items-center pr-[7px]">
        <button aria-label="Magnifier settings">
          <svg width="21" height="20" viewBox="0 0 21 20"><circle cx="10" cy="8" r="4.500" fill="#bcd6dc" stroke="#333" strokeWidth="1.500" /><path d="M13 12L18 18" stroke="#555" strokeWidth="2.800" /><path d="M0 18L20 1" stroke="#222" strokeWidth="1.300" /></svg>
        </button>
        <button aria-label="Preferences" className="ml-[17px] flex items-center gap-[3px]">
          <svg width="18" height="18" viewBox="0 0 17 17"><circle cx="8.500" cy="8.500" r="6.500" fill="none" stroke="#555" strokeWidth="3" strokeDasharray="1.700 1.700" /><circle cx="8.500" cy="8.500" r="5" fill="#999" stroke="#666" /><circle cx="8.500" cy="8.500" r="1.800" fill="#eee" stroke="#666" /></svg>
          <Chev />
        </button>
        <button aria-label="Render check" className="ml-4 flex items-center gap-0.5">
          <svg width="20" height="20" viewBox="0 0 20 20"><path d="M3 7C5 3 14 3 16 7C17 12 14 16 10 17C5 16 2 12 3 7Z" fill="#a6a6e8" stroke="#4c4c90" /><path d="M7 4C8 2 11 2 12 4M15 6C19 1 20 6 16 10M1 6L4 9" fill="none" stroke="#4c4c90" strokeWidth="1.300" /><path d="M9 14L11.500 18L17 8" fill="none" stroke="#118c11" strokeWidth="2.500" /></svg>
          <Chev />
        </button>
        <button aria-label="Grid check" className="ml-4 flex items-center gap-0.5">
          <svg width="20" height="20" viewBox="0 0 20 20"><path d="M8 1L16 8L13 18L4 14L1 8Z" fill="#9c9cee" stroke="#4c4c90" /><path d="M1 9H16M8 1V17M4 4L14 14" stroke="#2c6cc8" /><path d="M9 14L11.500 18L18 8" fill="none" stroke="#118c11" strokeWidth="2.500" /></svg>
          <Chev />
        </button>
        <span className="ml-[15px] flex"><ArrowButton label="Mode bar options" /></span>
      </div>
    </div>
  );
}

/* ---------- rulers ---------- */

const STEP = 62.73;

function TopRuler() {
  const zero = 976;
  const ticks = Array.from({ length: 260 }, (_, i) => i - 155);
  return (
    <svg className="h-4 min-w-0 flex-1 bg-white" aria-hidden="true">
      {ticks.map((k) => {
        const x = Math.round(zero + (k * STEP) / 10) + 0.5;
        const h = k % 10 === 0 ? 16 : k % 5 === 0 ? 5 : 3;
        return <path key={k} d={`M${x} ${16 - h}V16`} stroke="#000" />;
      })}
      {ticks.filter((k) => k % 10 === 0 && k < 70).map((k) => (
        <text key={k} x={Math.round(zero + (k * STEP) / 10) + 3} y="11" fontSize="9" fontFamily="Liberation Sans, sans-serif">
          {Math.abs(k) * 200}
        </text>
      ))}
      <path d="M452.500 0V16" stroke="#888" />
      <rect y="15" width="100%" height="1" />
    </svg>
  );
}

function SideRuler() {
  const zero = 554;
  const ticks = Array.from({ length: 152 }, (_, i) => i - 90);
  return (
    <svg className="h-full w-4 shrink-0 bg-white" aria-hidden="true">
      {ticks.map((k) => {
        const y = Math.round(zero + (k * STEP) / 10) + 0.5;
        const h = k % 10 === 0 ? 16 : k % 5 === 0 ? 5 : 3;
        return <path key={k} d={`M${16 - h} ${y}H16`} stroke="#000" />;
      })}
      {ticks.filter((k) => k % 10 === 0 && k > -90).map((k) => (
        <text key={k} transform={`translate(11 ${Math.round(zero + (k * STEP) / 10) - 3}) rotate(-90)`} fontSize="9" fontFamily="Liberation Sans, sans-serif">
          {Math.abs(k) * 200}
        </text>
      ))}
      <rect x="15" width="1" height="100%" />
    </svg>
  );
}

/* ---------- drawing ---------- */

function Post({ x, y, s = 20, dot = true }: { x: number; y: number; s?: number; dot?: boolean }) {
  return (
    <g transform={`translate(${x} ${y}) rotate(19)`}>
      <rect x={-s / 2} y={-s / 2} width={s} height={s} vectorEffect="non-scaling-stroke" />
      {dot && <rect x="-1" y="-1" width="2" height="2" vectorEffect="non-scaling-stroke" />}
    </g>
  );
}

const planA = {
  thick: [
    "M460 495L603 132L1135 329L975 741L946 731L1093 348L620 173L480 526L446 512L451 495L460 497",
    "M490 500L494 491L503 495L500 503Z",
    "M728 209L739 185M827 246L836 220M889 270L897 242M986 305L995 279M560 240L588 251M521 333L550 345M1064 426L1093 437M1027 521L1055 529",
    "M383 685L376 686L385 668L418 680L413 690L290 1006L350 1028L339 1056L277 1036L157 1340L196 1357L188 1383L118 1357Z",
    "M417 684L424 690L421 698L413 696M329 823L358 831M292 917L320 926",
    "M424 1470L434 1444L475 1460L595 1152L505 1119L517 1091L634 1134L494 1497Z",
    "M909 809L940 817L815 1144L785 1134Z",
    "M838 846L860 792L909 809L892 862M815 836L890 861L887 869L811 843Z",
    "M577 532L580 524L667 556L677 532L694 538L679 580L771 611L784 574L803 580L782 636L653 590L664 563Z",
    "M606 661L766 717L735 813L500 727L503 718L725 799L755 725L604 669Z",
    "M797 604L968 665M794 612L965 673L946 728",
  ],
  thin: [
    "M460 482L386 455L32 1357L508 1531L651 1175M456 521L400 669",
    "M193 1377L424 1461M634 1134L767 1183L785 1134M815 1144L781 1220L626 1164M965 741L934 815M761 722L732 801",
    "M835 856L735 1110L578 1055L560 1104M647 869L725 898L683 1007L604 977Z",
    "M694 536L700 527L791 559L784 575M627 552L597 630Q592 650 606 661M649 561L609 663M659 595L628 670M678 602L650 678M697 608L670 685M716 615L690 689M723 617L696 692M708 645L714 655L704 660L710 668",
    "M805 618L788 666L946 726",
  ],
};

const planB = {
  thick: [
    "M221 474L362 57L905 230L781 598L776 619L742 610L749 590L865 250L383 95L250 482Z",
    "M743 577L746 569L755 573L753 581Z",
    "M494 130L502 103M593 163L602 135M656 184L664 156M754 213L762 187M325 166L355 174M292 262L322 271M838 329L868 338M806 425L835 434",
    "M273 419L448 476M270 428L440 485M270 428L250 482",
    "M436 512L455 454L474 461L460 497L552 526L567 491L584 495L577 521L665 547L661 556L576 528L566 552Z",
    "M554 634L551 643L403 597L376 672L596 744L593 753L355 677L358 669L367 671L396 585Z",
    "M193 553L219 562L109 894L79 885Z M219 568L274 585L257 636L203 620ZM203 622L278 644L275 651L200 629Z",
    "M222 987L347 1023L335 1052L245 1024L136 1337L179 1349L168 1377L97 1355Z",
    "M686 768L721 777L712 800L480 1475L410 1453L418 1427L460 1439L566 1129L505 1107L515 1079L575 1099Z",
    "M683 780L675 779L677 771L686 773M635 921L664 930M602 1018L631 1027",
  ],
  thin: [
    "M784 587L860 611L547 1528L61 1371L186 1006M762 620L711 770M228 480L201 558M398 592L371 672",
    "M250 481L410 532L426 485M470 462L479 445L569 474L565 492",
    "M490 531L467 607M497 533L474 609M519 540L495 616M538 546L516 620M558 552L537 626M588 533L556 632M609 540L580 625Q572 640 554 636M478 560L472 572L484 570L476 580",
    "M252 650L163 910L320 960L304 1008M79 885L52 962L212 1013M109 894L91 945L222 987",
    "M308 747L389 773L349 885L271 857ZM172 1370L410 1445",
  ],
};

function Plan({ data }: { data: { thick: string[]; thin: string[] } }) {
  return (
    <>
      {data.thick.map((d) => <path key={d} d={d} strokeWidth="1.300" vectorEffect="non-scaling-stroke" />)}
      {data.thin.map((d) => <path key={d} d={d} strokeWidth=".9" vectorEffect="non-scaling-stroke" />)}
    </>
  );
}

const tag = { fontFamily: "Liberation Sans, sans-serif", fontWeight: "bold", fontSize: 33, textAnchor: "middle" } as const;

function Canvas() {
  return (
    <div className="min-h-0 min-w-0 flex-1 overflow-hidden bg-[#555]">
      <svg width="100%" height="100%" role="img" aria-label="Two mirrored floor plans">
        <g fill="none" stroke="#666">
          <path d="M437.500 98V92.500H445M458 92.500H465.500V98M465.500 113V118.500H458M445 118.500H437.500V113" />
          <rect x="445.500" y="99.500" width="12" height="12" />
        </g>
        <rect x="973.500" y="550.500" width="6" height="9" fill="none" stroke="#7c7c7c" />
        <g transform="translate(140 84) scale(.33333 .34435)" fill="none" stroke="#000">
          <Plan data={planA} />
          <Post x={400} y={486} /><Post x={331} y={658} /><Post x={205} y={992} /><Post x={73} y={1327} dot={false} /><Post x={775} y={1204} s={10} dot={false} />
          <g stroke="none">
            <path d="M1105 363L1124 368L1107 414L1089 407Z" fill="#f00" />
            <path d="M1018 577L1040 582L1021 629L1005 624Z" fill="#00f" />
            <path d="M1131 351L1202 361L1183 472L1117 464ZM1051 552L1133 562L1113 676L1036 662Z" fill="#fff" />
          </g>
        </g>
        <g transform="translate(710 184) scale(.33333 .34435)" fill="none" stroke="#000">
          <Plan data={planB} />
          <Post x={829} y={628} /><Post x={769} y={803} /><Post x={651} y={1140} /><Post x={536} y={1479} dot={false} /><Post x={70} y={954} s={10} dot={false} />
          <g stroke="none">
            <path d="M344 93L362 98L348 145L327 139Z" fill="#f00" />
            <path d="M268 314L287 319L274 366L252 361Z" fill="#00f" />
            <path d="M288 41L347 72L290 170L231 136ZM208 240L278 277L220 376L153 337Z" fill="#fff" />
          </g>
        </g>
        <text {...tag} fill="#f00" transform="translate(526 226) rotate(8) scale(-1 1)" y="12">E</text>
        <text {...tag} fill="#00f" transform="translate(501 294) rotate(8) scale(-1 1)" y="12">G</text>
        <text {...tag} fill="#f00" transform="translate(807 220) rotate(29)" y="12">E</text>
        <text {...tag} fill="#00f" transform="translate(783 290) rotate(29)" y="12">G</text>
      </svg>
    </div>
  );
}

/* ---------- right side ---------- */

function ObjInfo() {
  return (
    <section className="flex h-[517px] shrink-0 flex-col bg-[#e8e8e8]">
      <PanelHeader title="Obj Info" />
      <div className="relative flex h-3 justify-center border-b border-[#cacaca] pr-[1px]">
        <div role="tablist" className="z-10 mt-1 flex h-[15px] rounded-[3px] border border-[#b4b4b4] bg-white text-[10px] leading-[13px]">
          <button role="tab" aria-selected="true" className="w-[46px] rounded-l-[2px] bg-linear-to-b from-[#5aa9fb] to-[#0f72fb] text-white">Shape</button>
          <button role="tab" aria-selected="false" className="w-[38px] border-r border-[#ddd]">Data</button>
          <button role="tab" aria-selected="false" className="w-[50px]">Render</button>
        </div>
        <span className="absolute top-0.5 right-px flex"><ArrowButton small label="Object info options" /></span>
      </div>
      <div className="flex flex-1 flex-col bg-[#dedede] pt-[13px]">
        <p className="h-4 pl-0.5 text-[11px] leading-[14px] font-bold text-black">No Selection</p>
        <div className="mr-px flex-1 border border-[#b8b8b8] bg-[#e8e8e8]" />
      </div>
      <div className="mt-1 h-[3px] border-y border-[#cfcfcf]" />
      <div className="flex h-[34px] flex-col pt-0.5">
        <button disabled className="ml-[3px] h-[13px] w-[33px] border border-[#c2c2c2] bg-[#eee] text-[9px] leading-[11px] text-[#bbb]">IFC...</button>
        <label className="mt-0.5 flex items-center pr-0.5 pl-[5px] text-[9px] leading-4 text-black">
          <span className="w-[35px]">Name:</span>
          <input className="h-4 min-w-0 flex-1 border border-[#cfcfcf] bg-white" />
        </label>
      </div>
    </section>
  );
}

const navTabs: [string, React.ReactNode][] = [
  ["Classes", <ClassesIcon />],
  ["Design layers", <LayersIcon />],
  ["Sheet layers", <SheetIcon />],
  [
    "Viewports",
    <svg width="14" height="14" viewBox="0 0 14 14"><rect x="2.500" y="2.500" width="9" height="9" fill="#fff" stroke="#555" /><path d="M3 7L6 5.500L9 7L11 6V11H3Z" fill="#a9a9ee" /><path d="M1 4V1H4M10 1H13V4M13 10V13H10M4 13H1V10" fill="none" stroke="#111" strokeWidth="1.700" /></svg>,
  ],
  ["Saved views", <PageIcon />],
  [
    "References",
    <svg width="14" height="14" viewBox="0 0 14 14"><path d="M5 1H10L13 4V12.500H5Z" fill="#fff" stroke="#888" /><path d="M2 12.500C1.500 9 3 7 6 6" fill="none" stroke="#111" strokeWidth="2" /><path d="M3.500 3.500H9V9Z" fill="#111" /></svg>,
  ],
];

function Navigation() {
  return (
    <section className="flex min-h-0 flex-1 flex-col bg-[#e8e8e8]">
      <PanelHeader title="Navigation - Sheet Layers" />
      <div className="relative flex h-[15px] justify-center border-b border-[#cacaca]">
        <div role="tablist" className="z-10 mt-1.5 flex h-[18px] overflow-hidden rounded-[4px] border border-[#b4b4b4] bg-white">
          {navTabs.map(([name, art]) => (
            <button
              key={name}
              role="tab"
              aria-label={name}
              aria-selected={name === "Sheet layers"}
              className={
                "flex h-4 w-7 items-center justify-center border-r border-[#ddd] last:border-r-0 " +
                (name === "Sheet layers" ? "bg-linear-to-b from-[#5aa9fb] to-[#0f72fb]" : "")
              }
            >
              {art}
            </button>
          ))}
        </div>
        <span className="absolute top-0.5 right-[7px] flex"><ArrowButton small label="Navigation options" /></span>
      </div>
      <div className="flex min-h-0 flex-1 flex-col bg-[#dedede] pt-[15px] pr-[3px] pl-[3px]">
        <div className="flex min-h-0 flex-1 flex-col border-t border-r border-[#c4c4c4] bg-white">
          <table className="w-full table-fixed border-collapse text-left">
            <thead>
              <tr className="h-[22px] border-b border-[#cfcfcf] text-[11px] leading-4 text-[#333]">
                <th className="w-[25px] font-normal" aria-label="Active" />
                <th className="w-[83px] border-x border-[#d8d8d8] pl-1 font-normal whitespace-nowrap">Sheet Numb...</th>
                <th className="pl-1 font-normal">Sheet Title</th>
                <th className="w-[5px] border-l border-[#d8d8d8]" aria-label="More" />
              </tr>
            </thead>
            <tbody />
          </table>
          <div className="mt-auto flex h-[11px] items-center border-t border-[#e4e4e4] bg-[#fafafa] pl-px">
            <div className="h-1.5 w-[90%] rounded-full bg-[#c1c1c1]" />
          </div>
        </div>
        <div className="h-px" />
      </div>
    </section>
  );
}

const coords: [string, string][] = [["X:", "-16700"], ["Y:", "14300"], ["L:", "21986"], ["A:", "139.43°"]];

export default function App() {
  return (
    <div className="flex h-screen w-full flex-col overflow-hidden bg-[#b2b2b2] font-['Inter',sans-serif] text-black">
      <div className="h-0.5 shrink-0 bg-linear-to-r from-[#5d8d92] from-5% via-[#0c1d20] via-20% to-[#7d9294]" />

      <div className="relative z-20 flex h-[22px] shrink-0 items-center border-b border-[#b0b0b0] bg-linear-to-b from-[#efefef] to-[#d0d0d0]">
        <div className="flex gap-2 pl-2">
          <button aria-label="Close window" className="size-3 rounded-full border border-[#b5b5b5] bg-[#cdcdcd]" />
          <button aria-label="Minimize window" className="size-3 rounded-full border border-[#e09f28] bg-[#fdb528]" />
          <button aria-label="Zoom window" className="size-3 rounded-full border border-[#1da52c] bg-[#27c138]" />
        </div>
        <h1 className="ml-[17px] font-['Roboto',sans-serif] text-[13px] leading-[18px] whitespace-nowrap text-[#8a8a8a]">Vectorworks Architect</h1>
        <div className="absolute top-1 left-[908px] flex items-center gap-[7px]">
          <i className="mt-1 h-3 w-3 bg-[#0fa59d]" />
          <span className="text-[13px] leading-4 text-[#555]">Untitled 2.vwx</span>
        </div>
        <div className="absolute top-0 left-[201px] flex h-[15px] w-[801px] items-center bg-linear-to-b from-[#e0e0e0] to-[#cbcbcb] pl-1 shadow-[0_2px_5px_rgba(0,0,0,0.45)]">
          <button aria-label="Close Resource Manager" className="flex"><CloseMark /></button>
          <button aria-label="Collapse Resource Manager" className="ml-[5px] h-0.5 w-[7px] bg-[#999]" />
          <h2 className="ml-[7px] text-[11px] leading-[15px]">Resource Manager</h2>
        </div>
      </div>

      <main className="flex min-h-0 flex-1">
        <aside className="flex w-[218px] shrink-0 flex-col bg-[#e8e8e8]">
          <BasicPalette />
          <Splitter />
          <Attributes />
          <Splitter />
          <ToolSets />
        </aside>
        <VSplitter />
        <div className="flex min-w-0 flex-1 flex-col">
          <DocTabs />
          <ViewBar />
          <ModeBar />
          <div className="flex h-4 shrink-0">
            <button aria-label="Set origin" className="size-4 bg-[#e8e8e8]">
              <svg width="16" height="16" viewBox="0 0 16 16"><circle cx="8" cy="8" r="4" fill="none" stroke="#111" strokeWidth="1.300" /><path d="M8 1.500V6.500M8 9.500V14.500M1.500 8H6.500M9.500 8H14.500" stroke="#111" strokeWidth="1.300" /></svg>
            </button>
            <TopRuler />
          </div>
          <div className="flex min-h-0 flex-1">
            <SideRuler />
            <Canvas />
          </div>
        </div>
        <VSplitter />
        <aside className="flex w-[273px] shrink-0 flex-col">
          <ObjInfo />
          <Splitter />
          <Navigation />
        </aside>
      </main>

      <footer className="flex h-[15px] shrink-0 items-center rounded-b-[4px] bg-[#d3d3d3] text-[9px] leading-[13px]">
        <p className="pl-2">For Help, press F1</p>
        <div className="ml-auto flex items-center pr-[17px]">
          {coords.map(([k, v]) => (
            <div key={k} className="mr-px flex h-[14px] w-20 items-center gap-[5px] border border-[#a9a9a9] pl-[3px]">
              <span>{k}</span>
              <span>{v}</span>
            </div>
          ))}
          <svg width="9" height="10" viewBox="0 0 9 10" className="ml-1"><path d="M1 0V10L9 5Z" fill="#888" /></svg>
        </div>
      </footer>
      <div className="flex h-1 shrink-0">
        <i className="w-40 bg-[#17233a]" />
        <i className="flex-1 bg-[#979797]" />
        <i className="w-[334px] bg-[#14171b]" />
      </div>
    </div>
  );
}
